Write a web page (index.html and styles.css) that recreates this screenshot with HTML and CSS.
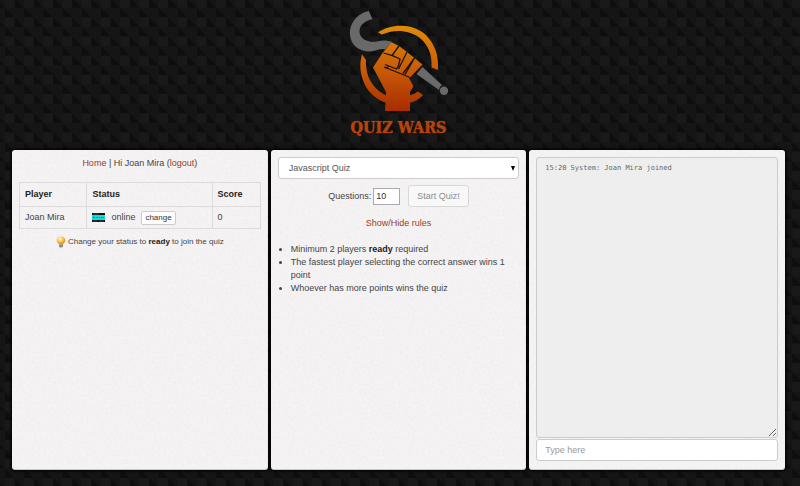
FILE: index.html
```html
<!DOCTYPE html>
<html lang="en">
<head>
<meta charset="utf-8">
<meta name="viewport" content="width=device-width, initial-scale=1">
<title>Quiz Wars</title>
<link rel="stylesheet" href="styles.css">
</head>
<body>
<header class="brand">
  <svg class="logo" viewBox="0 0 100 101" aria-hidden="true">
    <defs>
      <linearGradient id="fire" gradientUnits="userSpaceOnUse" x1="0" y1="15" x2="0" y2="100">
        <stop offset="0" stop-color="#e08a08"/>
        <stop offset="0.5" stop-color="#c85c06"/>
        <stop offset="1" stop-color="#a92c02"/>
      </linearGradient>
    </defs>
    <path fill="url(#fire)" d="M29 21.300C36 17 43 14.700 51.500 14.700C59 14.700 66 16.500 71.500 20C80 25 86 35 88 44Q89.500 51 89 59L82.500 56.500C83.500 44 79 34 71.500 27.500C62 20 51 19 41.500 20.700L32.500 23.500Z"/>
    <path fill="url(#fire)" d="M13 43.300L17 49Q16.500 53 17.500 58C18.500 69 27 80 38 85V92C29 90 20 82 16 74C11 64 10 53 13 43.300Z"/>
    <path fill="url(#fire)" d="M60 84.500Q65 83.500 69 80.500L74 84Q69 90 60 92Z"/>
    <path fill="#696969" d="M19.800 0L23.500 8C15 10 10 15 10.500 21C11 28 19 32 28 30.500C34 29 38 29 43 31L36 38.500C31 37 28 40 22 40.500C10 41 2 34 1 24C0 12 9 2 19.800 0Z"/>
    <path fill="#696969" d="M67.500 63L73.500 56L93 74A6 6 0 0 0 90 79Z"/>
    <circle fill="#696969" cx="95" cy="79.700" r="4.200"/>
    <path fill="url(#fire)" d="M42.500 31.300L50 35L58 41L65.500 47L73.500 53.500L61.500 66L59.500 66L64.500 75.500L61 81V100H36L37 81L24 56.500L33.500 42Z"/>
    <path fill="none" stroke="#1c1109" stroke-width="1.300" stroke-linejoin="round" d="M34.500 42L43.500 44.700L51 48L49.500 54.500L47.500 58L36 53.500M36 57L40 55.500M35 56L60 66M50 35L43 44.500M58 41L49.500 58M65.500 47L54 62.500M65.500 47L56 63.500"/>
  </svg>
  <h1 class="title">QUIZ WARS</h1>
</header>

<main class="board">
  <section class="panel">
    <nav class="account"><a href="#">Home</a> | Hi Joan Mira (<a href="#">logout</a>)</nav>
    <table class="players">
      <thead>
        <tr><th class="col-player">Player</th><th class="col-status">Status</th><th>Score</th></tr>
      </thead>
      <tbody>
        <tr>
          <td>Joan Mira</td>
          <td>
            <div class="status">
              <svg class="badge" viewBox="0 0 13 9" aria-hidden="true">
                <path fill="#111" d="M0 0H13V9H0Z"/>
                <path fill="#08dede" d="M0 2H13V7H0Z"/>
                <path stroke="#0a8a8c" d="M1 4.500H3M4 4.500H6M7 4.500H8M9 4.500H12"/>
                <path stroke="#777" stroke-width=".5" d="M1 1H7M1 8H5M7 8H12"/>
              </svg>
              <span>online</span>
              <button class="btn btn-small" type="button">change</button>
            </div>
          </td>
          <td>0</td>
        </tr>
      </tbody>
    </table>
    <p class="tip">
      <svg class="bulb" viewBox="0 0 10 12" aria-hidden="true">
        <defs>
          <radialGradient id="glow" cx=".4" cy=".3" r=".7">
            <stop offset="0" stop-color="#fffbe0"/>
            <stop offset=".5" stop-color="#f8c34c"/>
            <stop offset="1" stop-color="#d98a0c"/>
          </radialGradient>
        </defs>
        <path fill="url(#glow)" d="M5 .5C8 .5 9.300 2.500 9.300 4.500C9.300 6.500 7.500 7 7 8.500H3C2.500 7 .7 6.500 .7 4.500C.7 2.500 2 .5 5 .5Z"/>
        <path fill="#8d8d8d" d="M3 8.500H7V10.500L6 11.500H4L3 10.500Z"/>
      </svg>
      <span>Change your status to <strong>ready</strong> to join the quiz</span>
    </p>
  </section>

  <section class="panel">
    <div class="picker">
      <select class="field quiz" aria-label="Quiz"><option>Javascript Quiz</option></select>
    </div>
    <div class="start">
      <label for="questions">Questions:</label>
      <input class="count" id="questions" type="text" value="10">
      <button class="btn" type="button" disabled>Start Quiz!</button>
    </div>
    <p class="toggle"><a href="#rules">Show/Hide rules</a></p>
    <ul class="rules" id="rules">
      <li>Minimum 2 players <strong>ready</strong> required</li>
      <li>The fastest player selecting the correct answer wins 1 point</li>
      <li>Whoever has more points wins the quiz</li>
    </ul>
  </section>

  <section class="panel chat">
    <textarea class="field log" aria-label="Chat log" readonly>15:20 System: Joan Mira joined</textarea>
    <input class="field message" type="text" aria-label="Message" placeholder="Type here">
  </section>
</main>
</body>
</html>
```
FILE: styles.css
```css
* {
  box-sizing: border-box;
}

body {
  display: flex;
  flex-direction: column;
  min-height: 100vh;
  margin: 0;
  padding: 11px 15px 16px 12px;
  color: #444;
  font: 9px/13px "Liberation Sans", Arial, sans-serif;
  background: #151515 url("data:image/svg+xml,%3Csvg xmlns='http://www.w3.org/2000/svg' width='96' height='96' viewBox='0 0 480 480'%3E%3Cpattern id='t' width='96' height='96' patternUnits='userSpaceOnUse'%3E%3Cpath fill='%23191919' d='M0 0H48V48H0Z'/%3E%3Cpath fill='%230e0e0e' d='M48 0L96 48H48ZM0 48L48 96H0Z'/%3E%3C/pattern%3E%3Cpath fill='url(%23t)' d='M0 0H480V480H0Z'/%3E%3C/svg%3E") 5px -2px;
}

a {
  color: #a33a20;
  text-decoration: none;
}

strong {
  color: #222;
}

.brand {
  display: flex;
  flex-direction: column;
  align-items: center;
  height: 139px;
}

.logo {
  width: 100px;
  height: 101px;
}

.title {
  margin: 6px 0 0;
  color: #b5430c;
  font: bold 16px/20px "DejaVu Serif Condensed", "DejaVu Serif", serif;
  text-shadow: 0 0 1px #b5430c;
}

.board {
  display: grid;
  flex: 1;
  grid-template-columns: repeat(3, minmax(0, 1fr));
  gap: 3px;
}

.panel {
  padding: 7px;
  border-radius: 3px;
  background: #f6f4f5 url("data:image/svg+xml,%3Csvg xmlns='http://www.w3.org/2000/svg' width='120' height='120'%3E%3Cfilter id='n'%3E%3CfeTurbulence type='fractalNoise' baseFrequency='.4' numOctaves='2' stitchTiles='stitch'/%3E%3CfeColorMatrix values='1 0 0 0 0 1 0 0 0 0 1 0 0 0 0 0 0 0 0 1'/%3E%3C/filter%3E%3Crect width='120' height='120' filter='url(%23n)' opacity='.06'/%3E%3C/svg%3E");
  box-shadow: inset 0 -1px #c8c8c8, 0 0 3px 1px #000;
}

.account {
  text-align: center;
}

.players {
  width: 100%;
  margin: 12px 0 6px;
  border-collapse: collapse;
  table-layout: fixed;
}

.players th,
.players td {
  padding: 0 5px;
  border: 1px solid #dcdcdc;
  text-align: left;
}

.players th {
  height: 24px;
  color: #222;
}

.players td {
  height: 22px;
}

.col-player {
  width: 28%;
}

.col-status {
  width: 52%;
}

.status {
  display: flex;
  align-items: center;
  gap: 6px;
}

.badge {
  width: 13px;
  height: 9px;
}

.btn {
  height: 22px;
  padding: 0 8px;
  border: 1px solid #ccc;
  border-radius: 3px;
  color: #333;
  font: inherit;
  background: #fff;
}

.btn:disabled {
  border-color: #d8d8d8;
  color: #8c8c8c;
  background: #f8f8f8;
}

.btn-small {
  height: 14px;
  padding: 0 3px;
  border-radius: 2px;
  font-size: 8px;
  line-height: 12px;
}

.tip {
  display: flex;
  align-items: center;
  justify-content: center;
  gap: 2px;
  margin: 0;
  font-size: 8px;
}

.bulb {
  width: 10px;
  height: 12px;
}

.field {
  display: block;
  width: 100%;
  height: 22px;
  padding: 0 8px;
  border: 1px solid #ccc;
  border-radius: 3px;
  color: #555;
  font: inherit;
  background: #fff;
}

.picker {
  position: relative;
}

.picker::after {
  position: absolute;
  top: 9px;
  right: 4px;
  border: solid transparent;
  border-width: 5px 2px 0;
  border-top-color: #000;
  content: "";
  pointer-events: none;
}

.quiz {
  padding: 0 10px;
  appearance: none;
}

.start {
  display: flex;
  align-items: center;
  justify-content: center;
  margin-top: 6px;
}

.count {
  width: 27px;
  height: 17px;
  margin: 0 8px 0 2px;
  padding: 0 2px;
  border: 1px solid #aaa;
  color: #333;
  font: inherit;
  background: #fff;
}

.toggle {
  margin: 10px 0 13px;
  text-align: center;
}

.rules {
  margin: 0;
  padding: 0 0 0 13px;
}

.chat {
  display: flex;
  flex-direction: column;
  gap: 1px;
  padding-bottom: 9px;
}

.log {
  flex: 1;
  padding: 5px 8px;
  color: #666;
  font: 7px/10px "DejaVu Sans Mono", monospace;
  background: #eee;
  resize: vertical;
}

.message::placeholder {
  color: #999;
}
```
